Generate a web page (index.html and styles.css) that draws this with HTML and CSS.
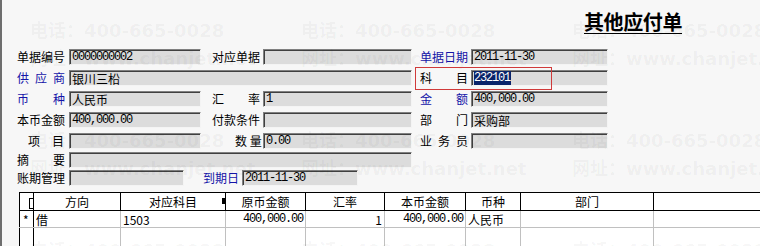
FILE: index.html
```html
<!DOCTYPE html>
<html>
<head>
<meta charset="UTF-8"/>
<title>其他应付单</title>
<link rel="stylesheet" href="styles.css">
</head>
<body>
<div class="page">

<div class="head"><h1 class="title">其他应付单</h1></div>

<div class="form">
    <div class="lbl"><span class="t">单据编号</span></div>
    <div class="in num">0000000002</div>
    <div class="lbl c3"><span class="t">对应单据</span></div>
    <div class="in"></div>
    <div class="lbl c5 blue"><span class="t">单据日期</span></div>
    <div class="in num">2011-11-30</div>

    <div class="lbl blue"><span class="t">供 应 商</span></div>
    <div class="in wide">银川三柗</div>
    <div class="lbl c5"><span class="t">科 目</span></div>
    <div class="in num"><span class="sel">232101</span></div>

    <div class="lbl blue"><span class="t">币 种</span></div>
    <div class="in">人民币</div>
    <div class="lbl c3"><span class="t">汇 率</span></div>
    <div class="in num">1</div>
    <div class="lbl c5 blue"><span class="t">金 额</span></div>
    <div class="in num">400,000.00</div>

    <div class="lbl"><span class="t">本币金额</span></div>
    <div class="in num">400,000.00</div>
    <div class="lbl c3"><span class="t">付款条件</span></div>
    <div class="in"></div>
    <div class="lbl c5"><span class="t">部 门</span></div>
    <div class="in">采购部</div>

    <div class="lbl"><span class="t short">项 目</span></div>
    <div class="in"></div>
    <div class="lbl c3"><span class="t tight">数 量</span></div>
    <div class="in num">0.00</div>
    <div class="lbl c5"><span class="t">业 务 员</span></div>
    <div class="in"></div>

    <div class="lbl"><span class="t">摘 要</span></div>
    <div class="in wide"></div>
    <div class="rest"></div>

    <div class="r7">
        <div class="lbl"><span class="t">账期管理</span></div>
        <div class="in due-a"></div>
        <div class="lbl blue due-l">到期日</div>
        <div class="in num due-b">2011-11-30</div>
    </div>

    <div class="focus"></div>
</div>

<table class="grid">
    <colgroup>
        <col class="w14"><col class="w87"><col class="w105"><col class="w80"><col class="w79">
        <col class="w81"><col class="w55"><col class="w133"><col class="w200">
    </colgroup>
    <thead>
        <tr>
            <th class="rh"><span class="mk"></span></th>
            <th>方向</th>
            <th class="sorted">对应科目<span class="grip"></span></th>
            <th>原币金额</th>
            <th>汇率</th>
            <th>本币金额</th>
            <th>币种</th>
            <th>部门</th>
            <th></th>
        </tr>
    </thead>
    <tbody>
        <tr>
            <td class="rh">*</td>
            <td>借</td>
            <td>1503</td>
            <td class="r num">400,000.00</td>
            <td class="r">1</td>
            <td class="r num">400,000.00</td>
            <td>人民币</td>
            <td></td>
            <td></td>
        </tr>
        <tr class="blank">
            <td class="rh"></td><td></td><td></td><td></td><td></td><td></td><td></td><td></td><td></td>
        </tr>
    </tbody>
</table>

<div class="mark">
    <div><p>电话：400-665-0028</p><p>网址：www.chanjet.net</p></div>
    <div><p>电话：400-665-0028</p><p>网址：www.chanjet.net</p></div>
    <div><p>电话：400-665-0028</p><p>网址：www.chanjet.net</p></div>
    <div><p>电话：400-665-0028</p><p>网址：www.chanjet.net</p></div>
    <div><p>电话：400-665-0028</p><p>网址：www.chanjet.net</p></div>
    <div><p>电话：400-665-0028</p><p>网址：www.chanjet.net</p></div>
    <div><p>电话：400-665-0028</p><p>网址：www.chanjet.net</p></div>
    <div><p>电话：400-665-0028</p><p>网址：www.chanjet.net</p></div>
    <div><p>电话：400-665-0028</p><p>网址：www.chanjet.net</p></div>
</div>

</div>
</body>
</html>
```

FILE: styles.css
```css
html, body {
    margin: 0;
}
body {
    width: 760px;
    height: 246px;
    overflow: hidden;
    background: #f7f7f7;
    color: #000;
    font: 12px "Noto Sans CJK SC", sans-serif;
}
.page {
    position: relative;
    height: 246px;
    box-sizing: border-box;
    border-left: 2px solid #6e6e6e;
    padding-left: 15px;
    overflow: hidden;
}

/* title */
.head {
    height: 49px;
    box-sizing: border-box;
    display: flex;
    justify-content: flex-end;
    padding-right: 78px;
}
.title {
    margin: 11px 0 0;
    font-size: 20px;
    font-weight: 700;
    line-height: 22px;
    letter-spacing: -0.4px;
    text-decoration: underline;
    text-decoration-thickness: 1px;
    text-underline-offset: 3px;
}

/* header form */
.form {
    position: relative;
    display: grid;
    grid-template-columns: 52px 132px 62px 149px 59px 137px;
    grid-template-rows: 21px 21px 21px 21px 19px 18px 16px;
    align-items: start;
}
.lbl {
    height: 16px;
    line-height: 16px;
    white-space: nowrap;
}
.lbl .t {
    display: block;
    width: 48px;
    text-align: justify;
    text-align-last: justify;
}
.lbl .short {
    width: 36px;
    margin-left: 11px;
}
.lbl .tight {
    width: 25px;
    margin-left: 23px;
}
.c3 {
    padding-left: 11px;
}
.c5 {
    padding-left: 8px;
}
.blue {
    color: #1414a8;
}
.in {
    height: 16px;
    box-sizing: border-box;
    background: #dcdcdc;
    border-top: 1px solid #808080;
    border-left: 1px solid #808080;
    border-right: 1px solid #f4f4f4;
    border-bottom: 1px solid #f4f4f4;
    box-shadow: inset 1px 1px 0 #404040;
    padding-left: 2px;
    line-height: 15px;
    white-space: nowrap;
    overflow: hidden;
}
.num {
    font-family: "Liberation Mono", monospace;
    letter-spacing: -1.2px;
}
.wide {
    grid-column: 2 / 5;
}
.rest {
    grid-column: 5 / 7;
}
.sel {
    background: #0a246a;
    color: #fff;
    padding-right: 1px;
}
.r7 {
    grid-column: 1 / -1;
    display: flex;
    align-items: flex-start;
}
.r7 > .lbl:first-child {
    width: 52px;
}
.due-a {
    width: 115px;
}
.due-l {
    margin-left: 19px;
    width: 39px;
}
.due-b {
    width: 116px;
}
.focus {
    position: absolute;
    z-index: 4;
    left: 398px;
    top: 18px;
    width: 137px;
    height: 23px;
    box-sizing: border-box;
    border: 1px solid #d03a3a;
}

/* detail grid */
.grid {
    margin: 6px 0 0 2px;
    border-collapse: collapse;
    table-layout: fixed;
    width: 834px;
    background: #fff;
}
.w14 { width: 14px; }
.w87 { width: 87px; }
.w105 { width: 105px; }
.w80 { width: 80px; }
.w79 { width: 79px; }
.w81 { width: 81px; }
.w55 { width: 55px; }
.w133 { width: 133px; }
.w200 { width: 200px; }
.grid th {
    height: 17px;
    padding: 0;
    border: 1px solid #000;
    font-weight: normal;
    text-align: center;
    line-height: 15px;
    white-space: nowrap;
}
.grid td {
    height: 16px;
    padding: 0 2px;
    border: 1px solid #c0c0c0;
    line-height: 15px;
    white-space: nowrap;
    overflow: hidden;
}
.grid td.rh {
    border-left-color: #000;
    border-right-color: #000;
    padding: 0 0 0 3px;
}
.grid td.r {
    text-align: right;
}
.grid .blank td {
    height: 19px;
}
.grid th.sorted {
    position: relative;
}
.grip {
    position: absolute;
    right: 0;
    top: 5px;
    width: 3px;
    height: 6px;
    background: #000;
}
.mk {
    display: inline-block;
    width: 3px;
    height: 9px;
    margin-left: 8px;
    border: 1px solid #000;
    border-right: 0;
    vertical-align: middle;
}

/* watermark */
.mark {
    position: absolute;
    inset: 0;
    z-index: 3;
    pointer-events: none;
    display: grid;
    grid-template-columns: repeat(3, 271px);
    grid-auto-rows: 110px;
    padding: 17px 0 0 28px;
    font: bold 18px "DejaVu Sans", "Noto Sans CJK SC", sans-serif;
    color: rgba(0, 0, 0, 0.045);
    white-space: nowrap;
}
.mark p {
    margin: 0;
    line-height: 28px;
}
```
